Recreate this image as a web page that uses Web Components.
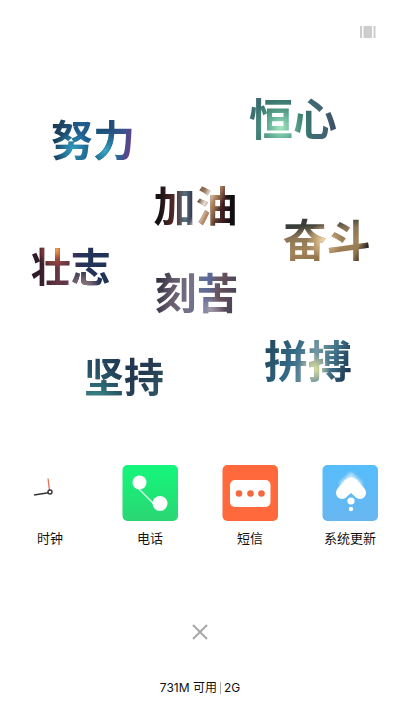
<!DOCTYPE html>
<html lang="zh-CN">
<head>
  <meta charset="utf-8">
  <meta name="viewport" content="width=device-width, initial-scale=1">
  <title>主屏幕</title>
  <style>
    body {
      margin: 0;
      background: #fff;
      color: #111;
      font-family: Inter, "Noto Sans CJK SC", sans-serif;
    }
  </style>
</head>
<body>
  <home-screen>
    <status-bar slot="status"></status-bar>

    <word-cloud>
      <cloud-word size="44" x="73.25" y="120" fill="radial-gradient(circle at 36% 62%, #a5e8bd 0, #6cb79d 16%, #448777 32%, #3a706f 44%, #436474 65%, #35334f 100%)">恒心</cloud-word>
      <cloud-word size="42" x="23.25" y="141" fill="radial-gradient(circle at 64% 66%, #3aa8c4 0, #257ba0 14%, transparent 32%), radial-gradient(circle at 26% 64%, #2f9dc0 0, transparent 26%), linear-gradient(100deg, #18394f 5%, #205f91 35%, #1b4a70 60%, #31558f 78%, #67428b 92%)">努力</cloud-word>
      <cloud-word size="42" x="48.9" y="207" fill="linear-gradient(115deg, transparent 50%, #e5dfd8 56%, #b48662 63%, transparent 73%), linear-gradient(90deg, #171013 6%, #572a29 24%, #54727f 37%, #342b44 47%, #997054 58%, #59402e 72%, #442022 80%, #100e10 92%)">加油</cloud-word>
      <cloud-word size="44" x="81.7" y="241" fill="radial-gradient(circle at 47% 50%, #f4dfb3 0, #c7a778 15%, transparent 32%), linear-gradient(110deg, transparent 80%, #171b20 90%), linear-gradient(170deg, #393e38 24%, #8c7557 38%, #a18459 58%, #8a6c43 80%)">奋斗</cloud-word>
      <cloud-word size="40" x="17.7" y="268" fill="radial-gradient(circle at 31% 20%, #f3a652 0, #a34b3c 12%, transparent 26%), radial-gradient(circle at 64% 86%, #a58d8b 0, #705f6b 15%, transparent 26%), linear-gradient(90deg, #321b29 10%, #673744 34%, #5c304c 47%, #283258 62%, #1f3458 95%)">壮志</cloud-word>
      <cloud-word size="42" x="49.1" y="294" fill="radial-gradient(circle at 67% 76%, #a19bae 0, transparent 20%), linear-gradient(100deg, #343344 8%, #675c6c 25%, #77728a 44%, #5c6b9b 60%, #68515b 74%, #424258 95%)">刻苦</cloud-word>
      <cloud-word size="40" x="31" y="378" fill="radial-gradient(circle at 14% 92%, #43928e 0, #2c6672 22%, transparent 46%), linear-gradient(125deg, #284d67 10%, #203750 45%, #263b51 65%, #315b68 92%)">坚持</cloud-word>
      <cloud-word size="44" x="77" y="362" fill="radial-gradient(circle at 57% 62%, #e0e59d 0, #a9b99c 12%, transparent 26%), linear-gradient(110deg, #244b62 10%, #356a87 35%, #7297a1 54%, #3f7188 72%, #19334b 92%)">拼搏</cloud-word>
    </word-cloud>

    <app-dock>
      <app-icon>
        <svg slot="icon" viewBox="0 0 56 56" aria-hidden="true">
          <path d="M26 13.500 L27.500 25" stroke="#e0705a" stroke-width="1.300"/>
          <path d="M12 30 L28 27.500" stroke="#333" stroke-width="1.500"/>
          <circle cx="28" cy="27" r="2" fill="#fff" stroke="#333" stroke-width="1.400"/>
        </svg>
        时钟
      </app-icon>
      <app-icon>
        <svg slot="icon" viewBox="0 0 56 56" aria-hidden="true">
          <defs>
            <linearGradient id="phone-bg" x2="0" y2="1">
              <stop stop-color="#13f77b"/>
              <stop offset="1" stop-color="#2bd673"/>
            </linearGradient>
          </defs>
          <rect x=".5" width="55.500" height="56" rx="5" fill="url(#phone-bg)"/>
          <path d="M17 24 L32 39" stroke="#d3fae3" stroke-width="1.500"/>
          <circle cx="17.500" cy="17.500" r="7" fill="#fff"/>
          <circle cx="38" cy="38.500" r="7.500" fill="#fff"/>
        </svg>
        电话
      </app-icon>
      <app-icon>
        <svg slot="icon" viewBox="0 0 56 56" aria-hidden="true">
          <rect x=".5" width="55.500" height="56" rx="5" fill="#ff693b"/>
          <rect x="8" y="15" width="40.500" height="27" rx="5" fill="#fff"/>
          <g fill="#f3683f">
            <circle cx="17" cy="28.500" r="3.300"/>
            <circle cx="28.500" cy="28.500" r="3.300"/>
            <circle cx="39.500" cy="28.500" r="3.300"/>
          </g>
        </svg>
        短信
      </app-icon>
      <app-icon>
        <svg slot="icon" viewBox="0 0 56 56" aria-hidden="true">
          <defs>
            <linearGradient id="update-bg" x2="0" y2="1">
              <stop stop-color="#56bdfb"/>
              <stop offset="1" stop-color="#68b6f0"/>
            </linearGradient>
            <filter id="trail" x="-20%" y="-40%" width="140%" height="180%">
              <feGaussianBlur stdDeviation="1.500"/>
            </filter>
          </defs>
          <rect x=".5" width="55.500" height="56" rx="5" fill="url(#update-bg)"/>
          <path d="M29 7 L40 17 L40 25 L18 25 L18 17Z" fill="#fff" opacity=".6" filter="url(#trail)"/>
          <path d="M23 15 Q29 9.500 35 15 L42.500 23.500 Q45.500 28 42.500 32 Q39 35.500 34.500 33 L29 28 L23.500 33 Q19 35.500 15.500 32 Q12.500 28 15.500 23.500Z" fill="#fff"/>
          <circle cx="29" cy="36" r="3.600" fill="#fff"/>
          <circle cx="29" cy="44" r="2.200" fill="#fff"/>
        </svg>
        系统更新
      </app-icon>
    </app-dock>

    <close-button slot="footer"></close-button>
    <memory-info slot="footer">
      <span>731M 可用</span>
      <span slot="network">2G</span>
    </memory-info>
  </home-screen>

  <script>
    class BaseElement extends HTMLElement {
      constructor() {
        super();
        this.attachShadow({ mode: "open" });
        const template = document.createElement("template");
        template.innerHTML = this.render();
        this.shadowRoot.appendChild(template.content.cloneNode(true));
      }
    }

    class HomeScreen extends BaseElement {
      render() {
        return `
          <style>
            :host {
              display: flex;
              flex-direction: column;
              min-height: 100vh;
            }
            main {
              flex: 1;
              display: flex;
              flex-direction: column;
            }
            footer {
              display: flex;
              flex-direction: column;
              align-items: center;
              gap: 35px;
              padding-bottom: 14px;
            }
          </style>
          <slot name="status"></slot>
          <main><slot></slot></main>
          <footer><slot name="footer"></slot></footer>
        `;
      }
    }

    class StatusBar extends BaseElement {
      render() {
        return `
          <style>
            :host {
              display: flex;
              justify-content: flex-end;
              padding: 26px 24px 0;
            }
            button {
              display: flex;
              padding: 0;
              border: 0;
              background: none;
              cursor: pointer;
            }
          </style>
          <button type="button" aria-label="切换效果">
            <svg width="16" height="12" viewBox="0 0 16 12" fill="#cdcdcd">
              <rect width="2" height="12"/>
              <rect x="3.500" width="8.500" height="12"/>
              <rect x="13.500" width="2" height="12"/>
            </svg>
          </button>
        `;
      }
    }

    class WordCloud extends BaseElement {
      render() {
        return `
          <style>
            :host {
              display: block;
              position: relative;
              height: 427px;
              /* word coordinates count from the top of the screen */
              --origin: 38px;
            }
          </style>
          <slot></slot>
        `;
      }
    }

    // x is a percentage of the cloud, y is in pixels, both for the word's centre
    class CloudWord extends BaseElement {
      render() {
        return `
          <style>
            :host {
              position: absolute;
              transform: translate(-50%, -50%);
              font-weight: 700;
              line-height: 60px;
              white-space: nowrap;
            }
            span {
              display: block;
              background: var(--fill);
              -webkit-background-clip: text;
              background-clip: text;
              color: transparent;
            }
          </style>
          <span><slot></slot></span>
        `;
      }
      connectedCallback() {
        this.style.left = `${this.getAttribute("x")}%`;
        this.style.top = `calc(${this.getAttribute("y")}px - var(--origin))`;
        this.style.fontSize = `${this.getAttribute("size")}px`;
        this.style.setProperty("--fill", this.getAttribute("fill"));
      }
    }

    class AppDock extends BaseElement {
      render() {
        return `
          <style>
            :host {
              display: grid;
              grid-template-columns: repeat(4, 1fr);
            }
          </style>
          <slot></slot>
        `;
      }
    }

    class AppIcon extends BaseElement {
      render() {
        return `
          <style>
            :host {
              display: flex;
              justify-content: center;
            }
            button {
              display: flex;
              flex-direction: column;
              align-items: center;
              gap: 7px;
              padding: 0;
              border: 0;
              background: none;
              color: inherit;
              font: inherit;
              font-size: 13px;
              line-height: 20px;
              cursor: pointer;
            }
            ::slotted(svg) {
              display: block;
              width: 56px;
              height: 56px;
            }
          </style>
          <button type="button">
            <slot name="icon"></slot>
            <span><slot></slot></span>
          </button>
        `;
      }
    }

    class CloseButton extends BaseElement {
      render() {
        return `
          <style>
            :host {
              display: block;
            }
            button {
              display: block;
              padding: 4px;
              border: 0;
              background: none;
              cursor: pointer;
            }
            svg {
              display: block;
            }
          </style>
          <button type="button" aria-label="关闭">
            <svg width="16" height="16" viewBox="0 0 16 16">
              <path d="M1 1 L15 15 M15 1 L1 15" stroke="#a5a5a5" stroke-width="1.800"/>
            </svg>
          </button>
        `;
      }
    }

    class MemoryInfo extends BaseElement {
      render() {
        return `
          <style>
            :host {
              display: flex;
              align-items: center;
              font-size: 12px;
              line-height: 18px;
            }
            .network {
              display: flex;
              align-items: center;
            }
            .network::before {
              content: "";
              height: 12px;
              margin: 0 3px;
              border-left: 1px solid #aaa;
            }
          </style>
          <slot></slot>
          <div class="network"><slot name="network"></slot></div>
        `;
      }
    }

    customElements.define("home-screen", HomeScreen);
    customElements.define("status-bar", StatusBar);
    customElements.define("word-cloud", WordCloud);
    customElements.define("cloud-word", CloudWord);
    customElements.define("app-dock", AppDock);
    customElements.define("app-icon", AppIcon);
    customElements.define("close-button", CloseButton);
    customElements.define("memory-info", MemoryInfo);
  </script>
</body>
</html>
